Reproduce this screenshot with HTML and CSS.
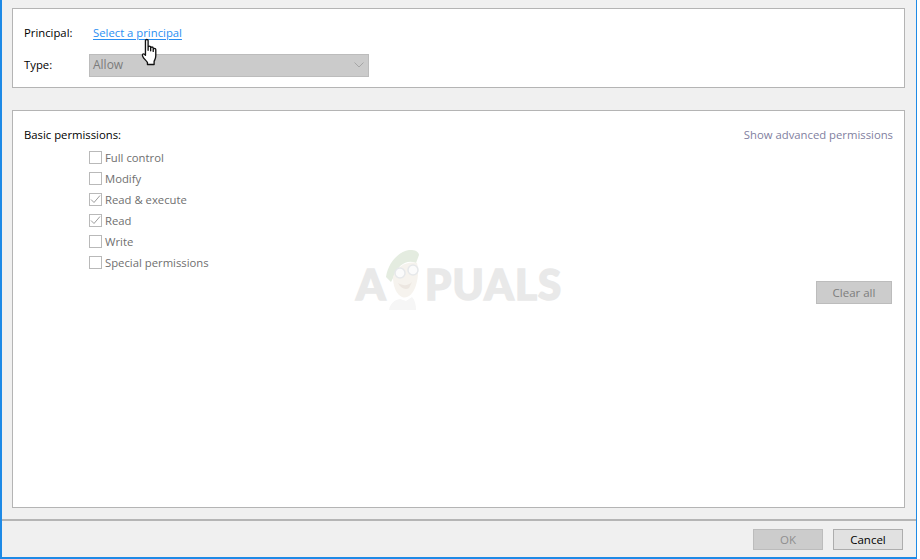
FILE: index.html
```html
<!DOCTYPE html>
<html lang="en">
<head>
<meta charset="utf-8">
<title>Permission entry</title>
<link rel="stylesheet" href="styles.css">
</head>
<body>
<div class="window">
  <main class="content">
    <section class="panel panel-top">
      <div class="field-row principal-row">
        <span class="label">Principal:</span>
        <a class="link" href="#">Select a principal</a>
      </div>
      <div class="field-row type-row">
        <span class="label">Type:</span>
        <div class="select">
          <span>Allow</span>
          <svg class="chevron" width="10" height="6" viewBox="0 0 10 6"><path d="M.5.5l4.500 4.500 4.500-4.500" fill="none" stroke="#a6a6a6" stroke-width="1"/></svg>
        </div>
      </div>
    </section>
    <section class="panel panel-main">
      <div class="perm-head">
        <span class="label">Basic permissions:</span>
        <span class="advanced">Show advanced permissions</span>
      </div>
      <ul class="perm-list">
        <li class="perm"><span class="box"></span>Full control</li>
        <li class="perm"><span class="box"></span>Modify</li>
        <li class="perm"><span class="box"><svg width="11" height="11" viewBox="0 0 11 11"><path d="M1 5.500l3 3 6-7" fill="none" stroke="#9c9c9c" stroke-width="1"/></svg></span>Read &amp; execute</li>
        <li class="perm"><span class="box"><svg width="11" height="11" viewBox="0 0 11 11"><path d="M1 5.500l3 3 6-7" fill="none" stroke="#9c9c9c" stroke-width="1"/></svg></span>Read</li>
        <li class="perm"><span class="box"></span>Write</li>
        <li class="perm"><span class="box"></span>Special permissions</li>
      </ul>
      <div class="clear-row"><button class="btn btn-disabled" type="button">Clear all</button></div>
    </section>
  </main>
  <footer class="footer">
    <button class="btn btn-disabled btn-ok" type="button">OK</button>
    <button class="btn btn-cancel" type="button">Cancel</button>
  </footer>

  <div class="watermark">
    <span class="wm-a">A</span>
    <svg class="mascot" width="44" height="60" viewBox="0 0 44 60">
      <path d="M1 27C3 13 13 2 24 0c6-.5 10 2 10 5l-3 8C22 9 13 15 9 26l-3 6z" fill="#e4ece0"/>
      <path d="M8 27C12 16 22 11 32 13c2 8 1 17-2 25-3 7-8 11-13 9C11 44 8 36 8 27z" fill="#f6f3ee"/>
      <circle cx="15" cy="23" r="5" fill="#fbfbfb" stroke="#e6e8ea" stroke-width="1.500"/>
      <circle cx="28" cy="20" r="5" fill="#fbfbfb" stroke="#e6e8ea" stroke-width="1.500"/>
      <path d="M13 33c5 3 10 3 14-1l-3 6c-3 2-8 1-11-5z" fill="#ece6e0"/>
      <path d="M4 60c1-6 5-10 11-11l6 2 6-4c3 3 4 8 4 13z" fill="#f6f6f6"/>
    </svg>
    <span class="wm-rest">PUALS</span>
  </div>

  <svg class="cursor" width="20" height="29" viewBox="0 0 18 26">
    <path d="M4 2.200C4 1 6.400 1 6.400 2.200V11V8.200c0-1.300 2.300-1.300 2.300 0V11.500V9c0-1.300 2.300-1.300 2.300 0v3V10.200c0-1.300 2.300-1.300 2.300 0v5.800c0 2.500-.7 3.300-1.500 5v2.800H5.800v-1.800C4 19.500 2.600 18.800 1.500 16.300.8 14.800 1.800 13.600 3.200 14.600L4 15.500z" fill="#fff" stroke="#111" stroke-width="1.200" stroke-linejoin="round"/>
  </svg>
</div>
</body>
</html>
```
FILE: styles.css
```css
* { box-sizing: border-box; }
html, body { margin: 0; padding: 0; background: #fff; }
body {
  width: 920px;
  height: 559px;
  overflow: hidden;
  font-family: "Open Sans", "Noto Sans", "Liberation Sans", sans-serif;
  font-size: 11.3px;
  color: #000;
}
.window {
  position: relative;
  width: 917px;
  height: 559px;
  background: #f0f0f0;
  border-left: 2px solid #1e8ae6;
  border-right: 1px solid #1e8ae6;
  border-bottom: 2px solid #1e8ae6;
  display: flex;
  flex-direction: column;
}
.content {
  flex: none;
  height: 519px;
  padding: 8px 11px 0 10px;
  display: flex;
  flex-direction: column;
  gap: 22px;
}
.panel {
  background: #fff;
  border: 1px solid #b4b4b4;
}
.panel-top {
  height: 80px;
  padding: 13px 0 0 11px;
  display: flex;
  flex-direction: column;
}
.panel-main {
  height: 398px;
  padding: 16px 11px 0 11px;
}
.field-row { display: flex; align-items: center; }
.principal-row { height: 22px; }
.type-row { height: 24px; margin-top: 9px; }
.label { display: inline-block; width: 65px; line-height: 16px; color: #000; }
.link {
  margin-left: 4px;
  color: #2a8ff2;
  text-decoration: underline;
  text-underline-offset: 2px;
  line-height: 16px;
}
.select {
  width: 280px;
  height: 23px;
  background: #cbcbcb;
  border: 1px solid #bcbcbc;
  color: #7b7b7b;
  display: flex;
  align-items: center;
  justify-content: space-between;
  padding: 0 4px 2px 3px;
  font-size: 12px;
}
.chevron { margin-top: 2px; }
.perm-head {
  display: flex;
  justify-content: space-between;
  line-height: 16px;
}
.perm-head .label { width: auto; }
.advanced { color: #7f80a0; }
.perm-list {
  list-style: none;
  margin: 4px 0 0 65px;
  padding: 0;
}
.perm {
  height: 21px;
  display: flex;
  align-items: center;
  color: #6f6f6f;
}
.box {
  width: 13px;
  height: 13px;
  margin-right: 3px;
  background: #fff;
  border: 1px solid #b9b9b9;
  display: inline-flex;
}
.box svg { display: block; }
.clear-row {
  display: flex;
  justify-content: flex-end;
  margin: 8px 1px 0 0;
}
.btn {
  width: 76px;
  height: 23px;
  padding: 0;
  border: 1px solid #bcbcbc;
  font: inherit;
  font-size: 11.5px;
}
.btn-disabled { background: #cccccc; color: #7d7d7d; }
.btn-ok { color: #8f8f8f; }
.btn-cancel { background: #e1e1e1; border-color: #adadad; color: #000; }
.footer {
  flex: none;
  height: 38px;
  border-top: 2px solid #b5b5b5;
  display: flex;
  justify-content: flex-end;
  gap: 10px;
  padding: 8px 13px 0 0;
}
.footer .btn { width: 70px; height: 21px; }
.watermark {
  position: absolute;
  left: 353px;
  top: 250px;
  width: 215px;
  height: 62px;
  pointer-events: none;
  font-family: "Lato", "Open Sans", sans-serif;
  font-weight: 900;
  font-size: 42px;
  color: #e9e9e9;
  -webkit-text-stroke: 1.5px #e9e9e9;
}
.wm-a { position: absolute; left: 1px; top: 8px; line-height: 52px; }
.wm-rest { position: absolute; left: 70px; top: 8px; line-height: 52px; letter-spacing: 1.2px; }
.mascot { position: absolute; left: 30px; top: 0; }
.cursor { position: absolute; left: 139px; top: 38px; }
```
